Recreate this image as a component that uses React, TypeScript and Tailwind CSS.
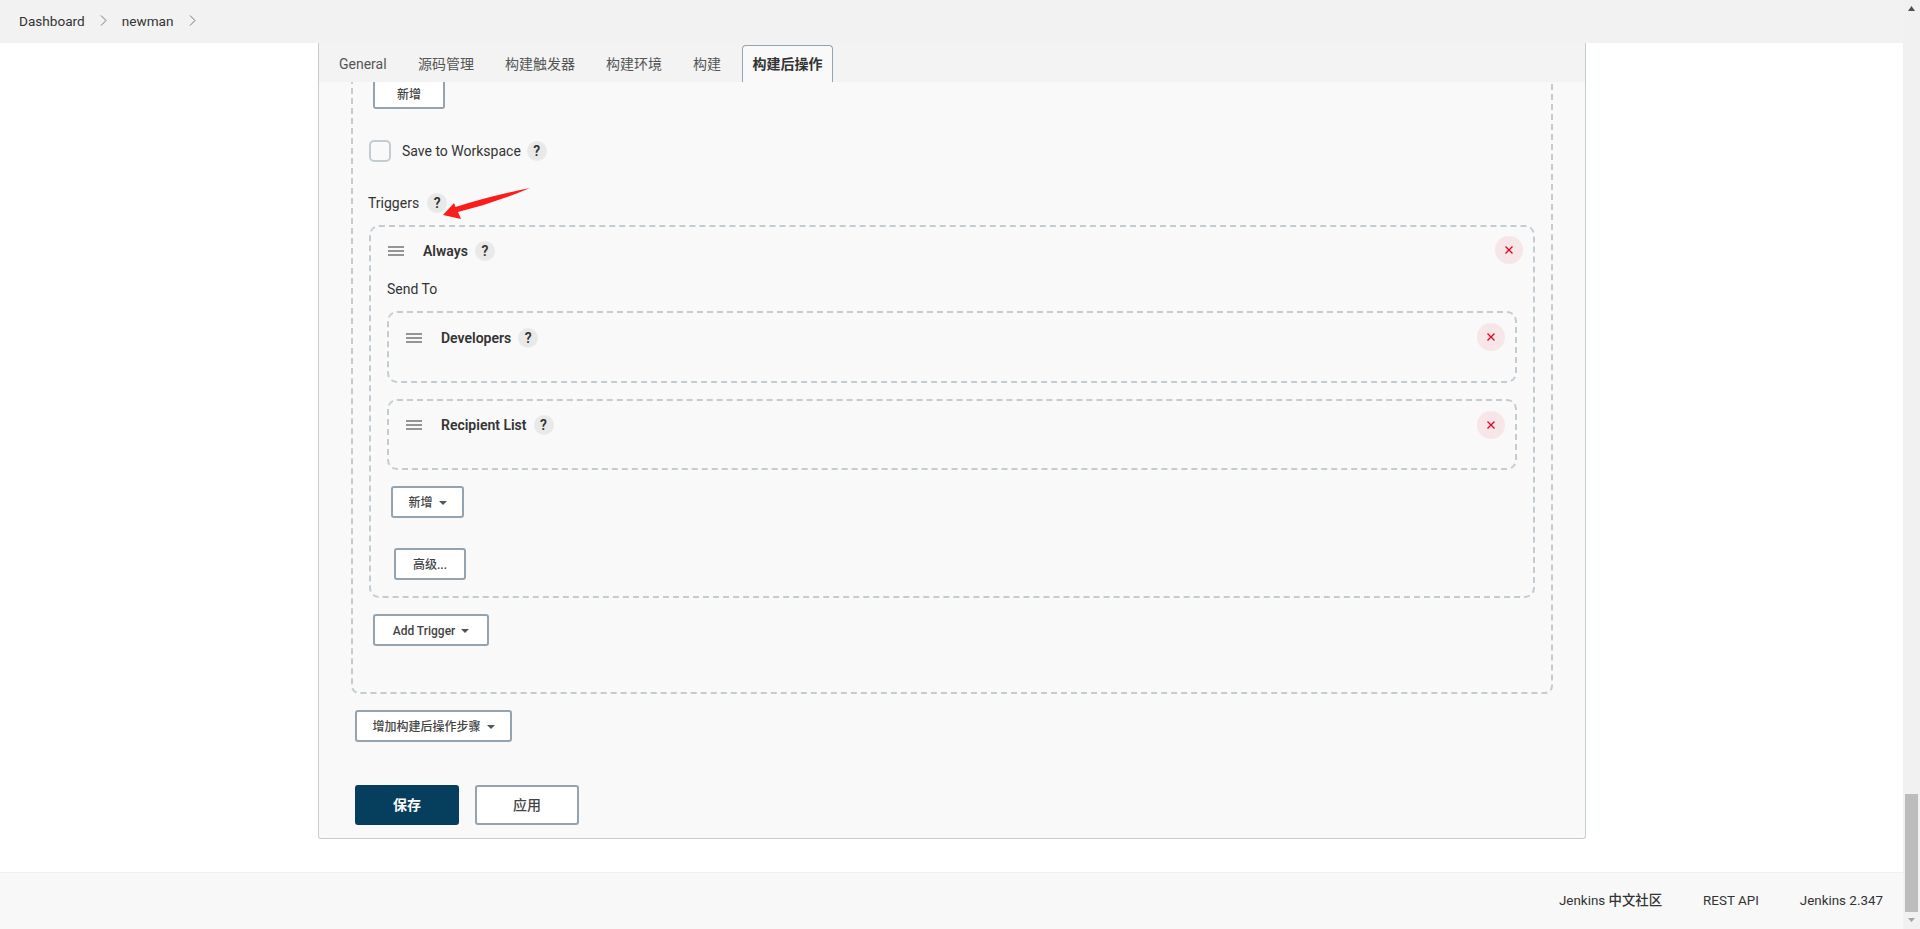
const font = "font-['Roboto','Noto_Sans_CJK_SC',sans-serif]";

const Help = ({ className = '' }: { className?: string }) => (
  <span className={`flex h-5 w-5 shrink-0 items-center justify-center rounded-full bg-[#e9e9e9] text-sm font-semibold text-[#333] ${className}`}>?</span>
);

const Grip = () => (
  <svg width="16" height="10" viewBox="0 0 16 10" className="shrink-0">
    <path d="M0 1h16M0 5h16M0 9h16" stroke="#333" strokeWidth="1.2" />
  </svg>
);

const Close = ({ className = '' }: { className?: string }) => (
  <span className={`absolute flex h-7 w-7 items-center justify-center rounded-full bg-[#f7e6e8] ${className}`}>
    <svg width="8" height="8" viewBox="0 0 8 8">
      <path d="M0.5 0.5l7 7M7.5 0.5l-7 7" stroke="#e6001f" strokeWidth="1.3" />
    </svg>
  </span>
);

const Caret = () => (
  <svg width="8" height="4" viewBox="0 0 8 4" className="ml-[6px] shrink-0">
    <path d="M0 0h8L4 4z" fill="#4a5560" />
  </svg>
);

const Chevron = ({ className = '' }: { className?: string }) => (
  <svg width="7" height="11" viewBox="0 0 7 11" className={className}>
    <path d="M1 0.5l5 5-5 5" fill="none" stroke="#777" />
  </svg>
);

const Btn = ({ children, className = '' }: { children: React.ReactNode; className?: string }) => (
  <button className={`flex h-8 items-center justify-center rounded-[3px] border-2 border-[#95a3ae] bg-white pt-px text-xs font-medium text-[#444] ${className}`}>
    {children}
  </button>
);

const Row = ({ label, className = '' }: { label: string; className?: string }) => (
  <div className={`flex items-center ${className}`}>
    <Grip />
    <b className="ml-[19px] pt-px text-sm leading-[19px] font-semibold text-[#333]">{label}</b>
    <Help className="ml-[7px]" />
  </div>
);

const tabs = ['源码管理', '构建触发器', '构建环境', '构建'];

export default function App() {
  return (
    <div className={`flex h-[929px] w-[1920px] overflow-hidden bg-white text-sm text-[#333] ${font}`}>
      <div className="flex min-w-0 flex-1 flex-col">
        <div className="flex h-[43px] shrink-0 items-center bg-[#f2f2f2] pl-[19px] text-[13.6px] text-[#333]">
          <span>Dashboard</span>
          <Chevron className="ml-[15px] -mt-[3px]" />
          <span className="ml-[15px]">newman</span>
          <Chevron className="ml-[15px] -mt-[3px]" />
        </div>

        <div className="ml-[318px] flex h-[796px] w-[1268px] shrink-0 flex-col overflow-hidden rounded-b-[3px] border-x border-b border-[#c3ccd1] bg-[#f9f9f9]">
          <div className="flex h-[39px] shrink-0 items-end bg-[#f3f3f3] pl-5 text-sm text-[#555]">
            <span className="mr-[31px] flex h-[37px] w-[48px] items-center">General</span>
            {tabs.map((t) => (
              <span key={t} className="mr-[31px] flex h-[37px] items-center">{t}</span>
            ))}
            <span className="-ml-[10px] flex h-[37px] w-[91px] items-center justify-center rounded-t-[4px] border-x border-t border-[#95a3ae] bg-[#f9f9f9] font-semibold text-[#333]">构建后操作</span>
          </div>

          <div className="min-h-0 flex-1 overflow-hidden pl-[32px]">
            <div className="-mt-[40px] h-[652px] w-[1202px] rounded-b-[8px] border-2 border-dashed border-[#c3ccd1] pl-5 pt-[38px]">
              <Btn className="h-[27px] w-[72px] rounded-t-none border-t-0 pt-[3px]">新增</Btn>

              <label className="mt-[31px] flex h-[22px] items-center">
                <span className="-ml-[4px] h-[22px] w-[22px] rounded-[5px] border-2 border-[#c3ccd1]" />
                <span className="ml-[11px]">Save to Workspace</span>
                <Help className="ml-[6px]" />
              </label>

              <div className="-ml-[5px] mt-[31px] flex h-5 items-center">
                <span>Triggers</span>
                <Help className="ml-2" />
              </div>

              <div className="relative -ml-[4px] mt-3 h-[373px] w-[1166px] rounded-[10px] border-2 border-dashed border-[#c3ccd1] pl-[17px] pt-[14px]">
                <Close className="right-[10px] top-[9px]" />
                <Row label="Always" />
                <div className="-ml-[1px] mt-[18px] leading-5">Send To</div>

                <div className="relative -ml-[1px] mt-3 h-[72px] w-[1130px] rounded-[10px] border-2 border-dashed border-[#c3ccd1] pl-[17px] pt-[15px]">
                  <Close className="right-[10px] top-[10px]" />
                  <Row label="Developers" />
                </div>
                <div className="relative -ml-[1px] mt-4 h-[71px] w-[1130px] rounded-[10px] border-2 border-dashed border-[#c3ccd1] pl-[17px] pt-[14px]">
                  <Close className="right-[10px] top-[10px]" />
                  <Row label="Recipient List" />
                </div>

                <Btn className="ml-[3px] mt-[16px] w-[73px]">新增<Caret /></Btn>
                <Btn className="ml-[6px] mt-[30px] w-[72px]">高级...</Btn>
              </div>

              <Btn className="mt-[16px] w-[116px]">Add Trigger<Caret /></Btn>
            </div>

            <Btn className="ml-1 mt-[16px] w-[157px]">增加构建后操作步骤<Caret /></Btn>

            <div className="ml-1 mt-[43px] flex gap-4">
              <button className="h-10 w-[104px] rounded-[3px] bg-[#063e5e] text-sm font-bold text-white">保存</button>
              <button className="h-10 w-[104px] rounded-[3px] border-2 border-[#95a3ae] bg-white text-sm font-medium text-[#444]">应用</button>
            </div>
          </div>
        </div>

        <div className="mt-[33px] flex h-[57px] shrink-0 items-center justify-end border-t border-[#f0f0f0] bg-[#f8f8f8] pr-5 text-[13.4px] text-[#333]">
          <span>Jenkins <span className="font-medium">中文社区</span></span>
          <span className="ml-[41px]">REST API</span>
          <span className="ml-[41px]">Jenkins 2.347</span>
        </div>
      </div>

      <div className="flex w-[17px] shrink-0 flex-col items-center bg-[#f1f1f1]">
        <svg width="7" height="5" viewBox="0 0 7 5" className="mt-[6px]"><path d="M0 5h7L3.5 0z" fill="#505050" /></svg>
        <div className="mt-[783px] h-[118px] w-[13px] bg-[#bcbcbc]" />
        <svg width="7" height="4" viewBox="0 0 7 4" className="mt-[6px]"><path d="M0 0h7L3.5 4z" fill="#a3a3a3" /></svg>
      </div>

      <svg width="100" height="40" viewBox="0 0 100 40" className="absolute left-[440px] top-[183px]">
        <path d="M90 5Q55 20 18 29L21 36L3 32L14 20L15.5 24Q50 13 90 5Z" fill="#fb1c1c" />
      </svg>
    </div>
  );
}
